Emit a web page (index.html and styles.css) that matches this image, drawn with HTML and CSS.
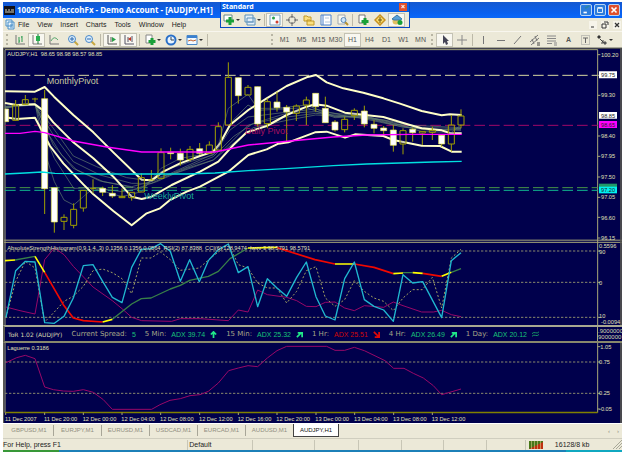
FILE: index.html
```html
<!DOCTYPE html>
<html lang="en">
<head>
<meta charset="utf-8">
<title>1009786: AleccohFx - Demo Account - [AUDJPY,H1]</title>
<link rel="stylesheet" href="styles.css">
</head>
<body>
<div class="app">
  <header class="titlebar">
    <svg class="logo" viewBox="0 0 11 11"><path d="M0 1h11v9H0z" fill="#101018"/><path d="M1 5h2M4 5h2M7 5h3M1 7h9" stroke="#d8d8c0" stroke-width="1"/></svg>
    <h1>1009786: AleccohFx - Demo Account - [AUDJPY,H1]</h1>
    <div class="winbtns">
      <button aria-label="Minimize"><svg viewBox="0 0 12 12"><path d="M3 9h4" stroke="#fff" stroke-width="2"/><path d="M5 4l5-3" stroke="#2c86a8" stroke-width="2"/></svg></button>
      <button aria-label="Restore"><svg viewBox="0 0 12 12"><path d="M3 4h6v5H3zM3 3h6" fill="none" stroke="#fff"/></svg></button>
      <button class="close" aria-label="Close"><svg viewBox="0 0 12 12"><path d="M3 3l6 6M9 3l-6 6" stroke="#fff" stroke-width="2"/></svg></button>
    </div>
  </header>

  <nav class="menubar">
    <svg class="doc" viewBox="0 0 11 11"><path d="M1 1h6v6H1zM3 3h6v7H3z" fill="#e8f4fc" stroke="#4a90c8"/><path d="M5 6h3M5 8h3" stroke="#4a90c8"/></svg>
    <button>File</button><button>View</button><button>Insert</button><button>Charts</button><button>Tools</button><button>Window</button><button>Help</button>
    <div class="mdibtns">
      <button aria-label="Minimize chart"><svg viewBox="0 0 8 8"><path d="M2 6h3" stroke="#333"/></svg></button>
      <button aria-label="Restore chart"><svg viewBox="0 0 8 8"><path d="M3 1h4v3M1 3h4v4H1z" fill="none" stroke="#333"/></svg></button>
      <button aria-label="Close chart"><svg viewBox="0 0 8 8"><path d="M2 2l4 4M6 2L2 6" stroke="#333" stroke-width="1.3"/></svg></button>
    </div>
  </nav>

  <div class="toolbar">
    <div class="tools charts">
      <i class="grip"></i>
      <button aria-label="Bar chart"><svg viewBox="0 0 12 12"><path d="M2 1v9h9" fill="none" stroke="#777"/><path d="M5 3v6M8 2v6M7 3h1M5 7h1" stroke="#2a9a50"/></svg></button>
      <button class="on" aria-label="Candlesticks"><svg viewBox="0 0 12 12"><path d="M2 1v9h9" fill="none" stroke="#777"/><path d="M7 0v10" stroke="#187838"/><path d="M5 2h4v5H5z" fill="#28b050"/></svg></button>
      <button aria-label="Line chart"><svg viewBox="0 0 12 12"><path d="M2 1v9h9" fill="none" stroke="#777"/><path d="M3 7q3-6 7-1" fill="none" stroke="#5aa870"/></svg></button>
      <button class="spaced" aria-label="Zoom in"><svg viewBox="0 0 12 12"><path d="M7 7l4 4" stroke="#c8a840" stroke-width="2"/><circle cx="5" cy="5" r="3.5" fill="#dceefc" stroke="#4a88c8"/><path d="M3 5h4M5 3v4" stroke="#2a68b0"/></svg></button>
      <button aria-label="Zoom out"><svg viewBox="0 0 12 12"><path d="M7 7l4 4" stroke="#c8a840" stroke-width="2"/><circle cx="5" cy="5" r="3.5" fill="#dceefc" stroke="#4a88c8"/><path d="M3 5h4" stroke="#2a68b0"/></svg></button>
      <i class="sep"></i>
      <button class="on" aria-label="Auto scroll"><svg viewBox="0 0 12 12"><path d="M2 1v9h9M5 3v5" fill="none" stroke="#555"/><path d="M6 3l4 2.500-4 2.500z" fill="#28a048"/></svg></button>
      <button class="on" aria-label="Chart shift"><svg viewBox="0 0 12 12"><path d="M2 1v9h9M5 3v5M9 2v6" fill="none" stroke="#556"/><path d="M8 3v4L5 5z" fill="#c03020"/></svg></button>
      <i class="sep"></i>
      <button class="drop" aria-label="Indicators"><svg viewBox="0 0 12 12"><path d="M2 1h6v8H2z" fill="#fff" stroke="#888"/><path d="M8 4v7M4.500 7.500h7" stroke="#18a038" stroke-width="3"/></svg></button>
      <button class="drop" aria-label="Periods"><svg viewBox="0 0 12 12"><circle cx="6" cy="6" r="4.500" fill="#e8f4ff" stroke="#2a70c8" stroke-width="2"/><path d="M6 3v3h3" fill="none" stroke="#345"/></svg></button>
      <button class="drop" aria-label="Templates"><svg viewBox="0 0 12 12"><path d="M1 1.500h10v9H1z" fill="#f4faff" stroke="#4a88c8"/><path d="M1 3h10" stroke="#3a80d0" stroke-width="2"/><path d="M2 7l3-1 2 1 3-1" fill="none" stroke="#c06030"/></svg></button>
      <i class="sep"></i>
    </div>
    <div class="tools periods">
      <i class="grip"></i>
      <button>M1</button><button>M5</button><button>M15</button><button>M30</button><button class="on">H1</button><button>H4</button><button>D1</button><button>W1</button><button>MN</button>
    </div>
    <div class="tools lines">
      <i class="grip"></i>
      <button class="on" aria-label="Cursor"><svg viewBox="0 0 12 12"><path d="M4 1v9l2-2 1 3 2-1-1-3h2z" fill="#445"/></svg></button>
      <button aria-label="Crosshair"><svg viewBox="0 0 12 12"><path d="M6 1v10M1 6h10" stroke="#888"/></svg></button>
      <i class="sep"></i>
      <button aria-label="Vertical line"><svg viewBox="0 0 12 12"><path d="M5.500 2v8" stroke="#777"/></svg></button>
      <button aria-label="Horizontal line"><svg viewBox="0 0 12 12"><path d="M2 6.500h8" stroke="#777"/></svg></button>
      <button aria-label="Trendline"><svg viewBox="0 0 12 12"><path d="M2 10l7-8" stroke="#777"/></svg></button>
      <button aria-label="Channel"><svg viewBox="0 0 12 12"><path d="M1 8l8-7M2 11l8-7M3 5l2 5M6 2l2 5" stroke="#777"/><path d="M8 9h3M8 11h3" stroke="#444"/></svg></button>
      <button aria-label="Fibonacci"><svg viewBox="0 0 12 12"><path d="M1 2h9M1 4.500h9M1 7h9M1 9.500h5M8 9h3M8 11h3" stroke="#888"/></svg></button>
      <button class="letter">A</button>
      <button aria-label="Text label"><svg viewBox="0 0 12 12"><path d="M1.500 1.500h8v9h-8z" fill="none" stroke="#999" stroke-dasharray="1 1"/><path d="M3 4h5M5.500 4v5" stroke="#666"/></svg></button>
      <button class="drop" aria-label="Arrows"><svg viewBox="0 0 12 12"><path d="M3 1l2 2-2 2-2-2z" fill="#333"/><path d="M4 5l4 4M7 6v3H5" fill="none" stroke="#444"/><path d="M9 7l2 2-2 2-2-2z" fill="#555"/></svg></button>
    </div>
  </div>

  <section class="standard">
    <div class="palettehead"><h2>Standard</h2><button aria-label="Close toolbar">×</button></div>
    <div class="palette">
      <button class="drop wide" aria-label="New chart"><svg viewBox="0 0 12 12"><path d="M1 1h8v6H1z" fill="#fff" stroke="#688"/><path d="M7 3v8M3 7h8" stroke="#18a038" stroke-width="3"/></svg></button>
      <button class="drop wide" aria-label="Profiles"><svg viewBox="0 0 12 12"><path d="M1 1h8v7H1zM3 4h8v7H3z" fill="#e4f0fa" stroke="#5a90b8"/><path d="M4 8h6" stroke="#6a98c0"/></svg></button>
      <i class="sep"></i>
      <button class="on" aria-label="Market Watch"><svg viewBox="0 0 12 12"><path d="M1 1h10v10H1z" fill="#f8fcff" stroke="#78a0b8"/><circle cx="4.500" cy="4" r="1.500" fill="#28a048"/><circle cx="8" cy="8" r="1.500" fill="#d04030"/></svg></button>
      <button aria-label="Data window"><svg viewBox="0 0 12 12"><circle cx="6" cy="6" r="3.500" fill="none" stroke="#777"/><path d="M6 0v4M6 8v4M0 6h4M8 6h4" stroke="#666"/></svg></button>
      <button aria-label="Navigator"><svg viewBox="0 0 12 12"><path d="M1 2h3l1 1h3v4H1zM4 6h3l1 1h3v4H4z" fill="#fbe080" stroke="#c09828"/></svg></button>
      <button aria-label="Terminal"><svg viewBox="0 0 12 12"><path d="M1 1h10v10H1z" fill="#fff" stroke="#4a80c8"/><path d="M3 1v10" stroke="#4a80c8"/><path d="M5 4h4M5 8h5" stroke="#b8c8d8"/></svg></button>
      <button aria-label="Strategy Tester"><svg viewBox="0 0 12 12"><path d="M1 1h7v9H1z" fill="#f8f8f0" stroke="#a0a8b0"/><path d="M8 8l3 3" stroke="#b89030" stroke-width="2"/><circle cx="6.500" cy="6" r="2.500" fill="#cce4f8" stroke="#5a88b8"/></svg></button>
      <i class="sep"></i>
      <button aria-label="New order"><svg viewBox="0 0 12 12"><path d="M2 1h6v8H2z" fill="#fff" stroke="#777"/><path d="M8 4v7M4.500 7.500h7" stroke="#18a038" stroke-width="3"/></svg></button>
      <button aria-label="MetaEditor"><svg viewBox="0 0 12 12"><path d="M6 1l5 5-5 5-5-5z" fill="#f8e070" stroke="#c89020" stroke-width="1.500"/><path d="M6 3v6M4 6h4" stroke="#705010"/></svg></button>
      <button class="on" aria-label="Expert Advisors"><svg viewBox="0 0 12 12"><circle cx="5" cy="7" r="3.500" fill="#e0c060"/><path d="M1 5l5-4 5 4-2 1H3z" fill="#58a0d8" stroke="#3878a8"/><circle cx="9" cy="8.500" r="2.500" fill="#18a038"/></svg></button>
    </div>
  </section>

  <main class="chart">
    <svg class="panel" viewBox="9 9 1857 579" role="img" aria-label="AUDJPY H1 price">
      <path class="frame" d="M15 588V14H1793V588M9 585.500H1866"/>
      <path class="edge" d="M10 9V588M9 9H1863V588"/>
      <g class="dash"><path stroke="#d8d8a0" d="M15 91H1793"/><path stroke="#a00868" d="M15 241H1793"/><path stroke="#489848" d="M15 428H1793"/><path stroke="#10b890" d="M15 436H1793"/></g>
      <g class="ma">
        <path d="M15 190L70 178L105 175L134 320L163 410L192 465L221 480L250 455L279 430L366 455L424 440L483 370L541 340L628 325L655 300L685 190L744 148L773 190L831 190L919 180L1005 215L1093 212L1180 235L1267 260L1354 262L1383 240"/>
        <path d="M15 188L60 182L105 178L134 270L163 340L221 430L279 428L366 440L424 430L483 380L570 350L640 330L700 225L744 180L773 196L919 188L1005 218L1093 214L1180 238L1383 248"/>
        <path d="M15 185L105 178L150 275L185 330L230 375L300 408L395 425L454 410L512 385L600 345L645 325L690 255L744 216L831 205L947 192L1050 216L1150 225L1240 250L1383 256"/>
        <path d="M15 187L105 180L160 270L220 350L300 390L395 415L454 415L541 375L640 335L700 275L760 235L860 205L947 200L1063 210L1180 230L1300 256L1383 250"/>
        <path d="M15 184L105 178L160 250L220 333L290 365L380 398L440 406L541 380L640 345L700 285L745 240L831 220L947 205L1063 215L1180 240L1300 258L1383 253"/>
        <path d="M105 180L160 300L220 370L310 410L410 430L470 410L560 370L640 345L720 278L760 248L860 226L947 210L1093 217L1210 247L1383 250"/>
      </g>
      <g class="band">
        <path d="M15 139L105 140L134 126L162 155L220 210L280 262L340 322L425 404L455 406L490 380L540 355L600 333L640 320L660 295L690 240L745 195L800 160L860 123L920 97L948 90L980 112L1030 130L1090 143L1150 160L1200 176L1265 198L1325 211L1350 208L1385 210"/>
        <path d="M15 174L50 180L105 178L134 200L160 232L220 292L280 340L340 395L395 455L425 462L455 455L515 420L600 380L655 350L700 300L740 262L800 243L860 210L920 185L945 178L980 182L1035 203L1150 216L1230 240L1265 250L1325 256L1350 264L1385 265"/>
        <path d="M15 217L50 222L105 218L150 303L190 355L250 418L280 448L340 498L395 541L440 505L480 490L510 465L560 440L600 425L685 380L745 330L800 313L835 296L865 292L945 262L980 260L1035 278L1065 268L1150 273L1180 285L1265 302L1320 303L1355 320L1385 320"/>
      </g>
      <path class="wick" d="M47 165V226M76 150V178M105 158V172M134 135V507M163 428V563M192 508V517M192 529V555M221 475V493M221 541V550M250 489V500M279 403V445M308 425V453M337 420V459M366 430V458M395 458V467M424 385V398M454 375V405M483 310V323M512 308V343M541 311V362M570 303V313M570 343V350M599 294V330M628 289V300M655 232V245M685 52V97M715 98V176M744 120V127M773 125V245M802 160V170M802 236V250M831 140V200M860 180V290M889 178V183M889 205V228M919 155V165M919 180V240M947 145V200M976 155V233M1005 225V260M1034 215V223M1034 254V262M1063 190V196M1063 212V225M1093 182V247M1122 225V265M1151 243V270M1180 240V320M1209 250V257M1209 297V328M1238 248V290M1267 265V300M1297 245V255M1297 262V285M1325 268V305M1354 210V240M1354 297V320M1383 193V213M1383 240V250"/>
      <path class="hollow" d="M38 180h18v46h-18zM67 164h18v14h-18zM96 162h18M183 517h18v12h-18zM212 493h18v48h-18zM241 436h18v53h-18zM270 430h18M357 454h18v4h-18zM386 442h18v16h-18zM415 398h18v43h-18zM445 405h18M474 323h18v77h-18zM561 313h18v30h-18zM619 300h18v25h-18zM646 245h18v70h-18zM676 97h18v143h-18zM735 127h18v23h-18zM793 170h18v66h-18zM880 183h18v22h-18zM910 165h18v15h-18zM1025 223h18v31h-18zM1054 196h18v16h-18zM1200 257h18v40h-18zM1258 259h18v5h-18zM1288 256h18v6h-18zM1345 240h18v57h-18zM1374 213h18v27h-18z"/>
      <path class="solid" d="M15 192h11v38h-11zM125 161h18v270h-18zM154 428h18v103h-18zM299 430h18v12h-18zM328 445h18v8h-18zM503 322h18v4h-18zM532 325h18v20h-18zM590 311h18v14h-18zM706 98h18v54h-18zM764 125h18v112h-18zM822 171h18v17h-18zM851 187h18v14h-18zM938 145h18v40h-18zM967 190h18v43h-18zM996 231h18v24h-18zM1084 198h18v39h-18zM1113 238h18v12h-18zM1142 249h18v8h-18zM1171 255h18v46h-18zM1229 253h18v10h-18zM1316 271h18v26h-18z"/>
      <path class="line magenta" d="M15 265H60L105 259L134 263L220 288L320 306L425 321H645L745 300L870 288L1000 276L1100 270L1230 268H1385"/>
      <path class="line aqua" d="M15 387L75 384L125 381L165 385L300 387H560L645 384L745 377L870 370L1000 362L1100 357L1200 354L1300 351L1385 349"/>
      <g class="pivot"><text x="140" y="116" fill="#c8c8a0">MonthlyPivot</text><text x="735" y="266" fill="#a81060">Daily Pivot</text><text x="433" y="462" fill="#18a898">WeeklyPivot</text></g>
      <path class="frame" d="M1793 29h8M1793 91h8M1793 151h8M1793 273h8M1793 334h8M1793 396h8M1793 457h8M1793 517h8M1793 579h8"/>
      <g class="tags"><path d="M1797 79h54v21h-54zM1797 201h54v20h-54z"/><path d="M1797 228h54v21h-54z"/><path d="M1797 416h54v12h-54z"/><path d="M1797 425h54v20h-54z"/></g>
      <g class="small"><text x="22" y="34">AUDJPY,H1&#160; 98.65 98.98 98.57 98.85</text>
        <text x="1803" y="35">100.20</text><text x="1803" y="157">99.30</text><text x="1803" y="280">98.40</text><text x="1803" y="340">97.95</text><text x="1803" y="402">97.50</text><text x="1803" y="463">97.05</text><text x="1803" y="524">96.60</text><text x="1803" y="585">96.15</text>
        <g class="dark"><text x="1803" y="96">99.75</text><text x="1803" y="218">98.85</text><text x="1803" y="245">98.65</text><text x="1803" y="441">97.20</text></g></g>
    </svg>

    <svg class="panel" viewBox="9 9 1857 252" role="img" aria-label="Strength, RSI and CCI indicators">
      <path class="frame" d="M15 9V261M1793 9V261M9 13H1866M1793 39h8M1793 133h8M1793 238h8"/>
      <path class="edge" d="M10 9V261M1863 9V261"/>
      <path class="level" d="M15 39H1793M15 133H1793M15 238H1793"/>
      <path class="line purple" d="M18 207L60 218L105 228L134 65L163 30L192 50L220 85L279 147L337 188L366 212L395 238L425 248L515 250L541 242H600L685 248L715 216L744 222L773 156L802 170L860 178L890 188L919 205L948 206L976 193L1005 192L1034 210L1063 218L1093 203L1151 208L1180 192L1209 203L1265 222H1300L1325 217L1354 230L1383 236"/>
      <path class="dots" d="M18 238L47 130L76 70L105 90L134 252L163 222L192 190L220 175L250 145L279 98L308 93L337 104L366 122L395 167L424 60H453L482 42L511 65L541 97L598 90L625 66L685 18L715 80L744 90L773 135L802 150H831L860 195L890 160L919 98L948 86L976 180L1005 205L1034 185L1063 128L1093 160L1122 180L1151 190L1180 218L1209 180L1238 155H1267L1297 118L1325 210L1354 60L1383 34"/>
      <path class="line green" d="M45 66L105 55M337 244L395 198L424 182L453 180L511 153L541 142L569 127L625 115L655 100L690 62L744 30M1209 104H1238M1354 103L1383 92"/>
      <path class="line red" d="M134 103L190 200L220 240L250 248L308 252M831 29L945 65L1005 78M1063 78L1122 88L1180 107M1268 106L1325 115"/>
      <path class="line yellow" d="M15 68L45 66M105 55L134 103M308 252L337 244M744 30L831 28M1005 78H1063M1180 107L1209 105M1238 104L1268 106M1325 115L1354 103"/>
      <path class="line sky" d="M18 238L47 98L76 70L105 72L134 254L163 256L192 235L220 180L250 83L279 80L308 130L337 178L366 194L395 88L424 34L453 32L482 17L511 40L541 130L569 65L598 131L625 68L655 35L685 18L715 104L744 86L773 206L802 122L831 150L860 175L890 118L919 72L948 176L976 234L1005 246L1034 122L1063 72L1093 185L1122 205L1151 216L1180 250L1209 110L1238 135L1268 131L1325 239L1354 68L1383 44"/>
      <g class="small"><text x="22" y="36">AbsoluteStrengthHistogram(0,9,1,4,,3) 0.1356 0.1356 0.0564&#160; RSI(2) 87.8388&#160; CCI(6) 128.9474&#160; Iwvv 3 98.5791 98.5791</text>
        <text x="1797" y="29">0.5596</text><text x="1797" y="48">90</text><text x="1797" y="140">0</text><text x="1797" y="239">10</text><text x="1803" y="257">-0.0094</text></g>
    </svg>

    <div class="adx">
      <div class="readings">
        <span class="name">ToR 1.02 (AUDJPY)</span>
        <span>Current Spread: <b>5</b></span>
        <span>5 Min: <b>ADX 39.74</b><svg viewBox="0 0 8 8"><path d="M4 8V1M1 4l3-3 3 3" stroke="#20e888"/></svg></span>
        <span>15 Min: <b>ADX 25.32</b><svg viewBox="0 0 8 8"><path d="M1 7l5-5M2 2h5v5" stroke="#20e888"/></svg></span>
        <span>1 Hr: <b class="down">ADX 25.51</b><svg viewBox="0 0 8 8"><path d="M1 1l5 5M7 1v6H2" stroke="#e00808"/></svg></span>
        <span>4 Hr: <b>ADX 26.49</b><svg viewBox="0 0 8 8"><path d="M1 7l5-5M2 2h5v5" stroke="#20e888"/></svg></span>
        <span>1 Day: <b>ADX 20.12</b><svg viewBox="0 0 8 8"><path d="M0 3q2-2 4-1t4-1M0 6q2-2 4-1t4-1" stroke="#18a868" stroke-width="1"/></svg></span>
      </div>
      <div class="scale"><span>.9000000</span><span>9000000</span></div>
    </div>

    <svg class="panel" viewBox="9 15 1857 240" role="img" aria-label="Laguerre indicator">
      <path class="frame" d="M15 15V224M1793 15V224M1793 26h8M1793 72h8M1793 166h8M1793 213h8"/>
      <path class="edge" d="M10 15V255M1863 15V255"/>
      <path class="axis" d="M15 223.500H1793"/>
      <path class="frame" d="M17 224v7M134 224v7M250 224v7M366 224v7M482 224v7M599 224v7M715 224v7M831 224v7M948 224v7M1064 224v7M1181 224v7M1297 224v7"/>
      <path class="level" d="M15 72H1793M15 166H1793"/>
      <path class="line purple" d="M18 74L50 59L76 52L105 62L134 147L160 155L190 159L220 160L250 155L280 163L310 185L337 214H455L480 200L510 187L541 182L570 173L600 170L625 160L655 135L686 98L715 90L744 83L773 86L802 60L831 38L860 25H980L1005 37H1034L1063 28L1093 38L1122 52L1155 68L1181 91H1212L1240 106L1270 120L1300 143L1325 170L1383 153"/>
      <g class="small"><text x="22" y="36">Laguerre 0.3186</text><text x="1801" y="32">1.05</text><text x="1797" y="78">0.75</text><text x="1797" y="172">0.25</text><text x="1797" y="219">-0.05</text>
        <text x="15" y="248">11 Dec 2007</text><text x="132" y="248">11 Dec 20:00</text><text x="248" y="248">12 Dec 00:00</text><text x="364" y="248">12 Dec 04:00</text><text x="480" y="248">12 Dec 08:00</text><text x="597" y="248">12 Dec 12:00</text><text x="713" y="248">12 Dec 16:00</text><text x="829" y="248">12 Dec 20:00</text><text x="946" y="248">13 Dec 00:00</text><text x="1062" y="248">13 Dec 04:00</text><text x="1179" y="248">13 Dec 08:00</text><text x="1295" y="248">13 Dec 12:00</text></g>
    </svg>
  </main>

  <nav class="tabs">
    <button>GBPUSD,M1</button><button>EURJPY,M1</button><button>EURUSD,M1</button><button>USDCAD,M1</button><button>EURCAD,M1</button><button>AUDUSD,M1</button><button class="active">AUDJPY,H1</button>
    <div class="scroll"><button aria-label="Scroll tabs left">‹</button><button aria-label="Scroll tabs right">›</button></div>
  </nav>

  <footer class="status">
    <span class="help">For Help, press F1</span><span>Default</span><span></span><span></span><span></span><span></span><span></span><span></span>
    <span class="traffic"><svg viewBox="0 0 14 8"><path d="M0 0h14v8H0z" fill="#487818"/><path d="M0 8l14-7v7z" fill="#c03010"/><path d="M2.500 0v8M5.500 0v8M8.500 0v8M11.500 0v8" stroke="#d8c888" stroke-width=".6"/></svg>16128/8 kb</span>
    <svg class="resize" viewBox="0 0 9 9"><path d="M0 9l9-9M3 9l6-6M6 9l3-3" stroke="#a8a898"/></svg>
  </footer>
  <div class="taskbar"></div>
</div>
</body>
</html>
```
FILE: styles.css
```css
* { box-sizing: border-box; }

body {
  margin: 0;
  background: #fff;
  font: 7px/9px "Liberation Sans", Arial, sans-serif;
  color: #222;
}

h1, h2 { margin: 0; }

button {
  padding: 0;
  border: 0;
  background: none;
  color: inherit;
  font: inherit;
}

svg { display: block; }

.app {
  position: relative;
  padding: 2px 3px 0;
}

.titlebar {
  display: flex;
  align-items: center;
  gap: 2px;
  height: 16px;
  padding: 0 2px 0 1px;
  background: linear-gradient(#1458d0, #0860f0 70%, #0a68f8);
  color: #fff;
}

.titlebar h1 {
  font: bold 8px/12px "Noto Sans", sans-serif;
  white-space: nowrap;
}

.logo, .doc { width: 11px; height: 11px; }

.winbtns {
  display: flex;
  gap: 2px;
  margin-left: auto;
}

.winbtns button {
  width: 12px;
  height: 12px;
  border: 1px solid #b8d4f4;
  border-radius: 2px;
  background: #2c7cdc;
}

.winbtns .close { background: #e0502c; }

.menubar {
  display: flex;
  align-items: center;
  gap: 8px;
  height: 13px;
  padding: 0 1px 0 2px;
  background: #ece9d8;
}

.doc { margin-right: -6px; }

.mdibtns {
  display: flex;
  gap: 4px;
  margin-left: auto;
}

.mdibtns button {
  width: 8px;
  height: 8px;
  background: #f6f4ea;
}

.toolbar {
  display: flex;
  justify-content: space-between;
  height: 17px;
  padding-right: 7px;
  border-top: 1px solid #f8f6ee;
  border-bottom: 1px solid #a8a898;
  background: #ece9d8;
  color: #555;
}

.tools, .palette {
  display: flex;
  align-items: center;
}

.charts { padding-left: 1px; }
.periods { margin-left: auto; }

.tools button {
  display: flex;
  justify-content: center;
  align-items: center;
  width: 17px;
  height: 14px;
}

.tools .spaced { margin-left: 2px; }

.tools svg, .palette svg { width: 12px; height: 12px; }

.tools .on, .palette .on {
  border: 1px solid #c4c2b4;
  background: #f8f7f0;
}

.tools .drop { width: 21px; }

.drop::after {
  content: "";
  margin-left: 1px;
  border: 2px solid transparent;
  border-top-color: #333;
  border-bottom: 0;
}

.grip {
  width: 3px;
  height: 11px;
  margin: 0 2px;
  border-left: 2px dotted #b8b5a4;
}

.sep {
  width: 1px;
  height: 12px;
  margin: 0 2px;
  background: #bcb9a8;
}

.letter { font-weight: bold; }

.standard {
  position: absolute;
  top: 2px;
  left: 220px;
  width: 190px;
  border: 1px solid #0848c0;
  border-top: 0;
  background: #ece9d8;
}

.palettehead {
  display: flex;
  justify-content: space-between;
  height: 10px;
  padding: 0 2px 0 1px;
  background: #0860e8;
  color: #fff;
}

.palettehead h2 { font: bold 7px/9px "Noto Sans", sans-serif; }

.palettehead button {
  width: 8px;
  height: 8px;
  margin-top: 1px;
  background: #e0502c;
  line-height: 8px;
  font-weight: bold;
}

.palette { height: 15px; }

.palette .sep { margin: 0 1px; }

.palette button {
  display: flex;
  justify-content: center;
  align-items: center;
  width: 17px;
  height: 14px;
}

.palette .wide { width: 21px; }

.chart { background: #00004c; }

.panel { width: 100%; height: auto; }

.panel path { fill: none; }
.panel .tags path:nth-child(1) { fill: #fff; }
.panel .tags path:nth-child(2) { fill: #f0f; }
.panel .tags path:nth-child(3) { fill: #209868; }
.panel .tags path:nth-child(4) { fill: #00f0f0; }

.frame { stroke: #a8a878; stroke-width: 3; }
.edge { stroke: #585850; stroke-width: 5; }
.axis { stroke: #808000; stroke-width: 5; }
.dash { stroke-width: 3; stroke-dasharray: 32 12; }
.level { stroke: #88886c; stroke-width: 3; stroke-dasharray: 7 5; }
.ma { stroke: #65806f; stroke-width: 2; }
.band { stroke: #ffffc8; stroke-width: 6; stroke-linejoin: round; }
.wick, .hollow { stroke: #a0a000; stroke-width: 3; }
.panel .hollow { fill: #00004c; fill-opacity: 0.2; }
.panel .solid { fill: #fff; stroke: #e8e850; stroke-width: 2; }
.line { stroke-width: 4; stroke-linejoin: round; }
.magenta { stroke: #f0f; }
.aqua { stroke: #00e0e0; }
.purple { stroke: #980868; stroke-width: 3; }
.green { stroke: #388048; }
.red { stroke: #f00800; stroke-width: 5; }
.yellow { stroke: #ff0; stroke-width: 5; }
.sky { stroke: #20b8d0; }
.dots { stroke: #a0a060; stroke-width: 3; stroke-dasharray: 6 6; }

.pivot { font-size: 27px; }
.small { font-size: 17px; fill: #e0e0b8; }
.dark { fill: #202020; }

.adx {
  display: flex;
  justify-content: space-between;
  height: 18px;
  border-top: 2px solid #a8a890;
  border-bottom: 2px solid #88886c;
  border-left: 2px solid #585850;
  color: #a8a888;
  white-space: nowrap;
}

.readings {
  display: flex;
  align-items: center;
  gap: 9px;
  padding-left: 3px;
  font-family: "DejaVu Sans", sans-serif;
}

.readings span {
  display: flex;
  align-items: center;
  gap: 5px;
}

.readings .name {
  color: #d8d8b0;
  font-size: 6px;
}

.readings b {
  color: #18c078;
  font: 7px/9px "Liberation Sans", sans-serif;
}

.readings .down { color: #d00808; }

.readings svg {
  width: 7px;
  height: 7px;
  fill: none;
  stroke-width: 2;
}

.scale {
  display: flex;
  flex-direction: column;
  justify-content: center;
  width: 25px;
  border-left: 1px solid #a8a878;
  color: #d8d8b0;
  font-size: 6px;
  line-height: 6px;
}

.tabs {
  display: flex;
  height: 15px;
  padding-left: 2px;
  border-top: 1px solid #fff;
  background: #ece9d8;
  color: #908e80;
  font-size: 6px;
}

.tabs > button {
  flex: none;
  width: 48px;
  height: 11px;
  margin-top: 1px;
}

.tabs > button + button { border-left: 1px solid #a8a698; }

.tabs > .active {
  width: 46px;
  height: 13px;
  margin-top: 0;
  border: 1px solid #444;
  border-top: 0;
  background: #fff;
  color: #111;
}

.scroll {
  display: flex;
  gap: 7px;
  margin-left: auto;
  padding-right: 3px;
}

.status {
  display: grid;
  grid-template-columns: 184fr 65fr 61fr 44fr 43fr 42fr 43fr 39fr 88fr 9px;
  align-items: center;
  height: 12px;
  border-top: 1px solid #d0cebf;
  background: #ece9d8;
  white-space: nowrap;
}

.status span {
  height: 10px;
  padding-left: 1px;
  border-left: 1px solid #c8c6b6;
  line-height: 10px;
}

.status .help { padding: 0; border: 0; }

.status .traffic {
  display: flex;
  align-items: center;
  gap: 12px;
  padding-left: 3px;
}

.traffic svg { width: 14px; height: 8px; }
.resize { width: 9px; height: 9px; }

.taskbar {
  height: 2px;
  background: linear-gradient(90deg, #389838 9%, #1c80b8 9% 91%, #10a8c0 91%);
}
```
